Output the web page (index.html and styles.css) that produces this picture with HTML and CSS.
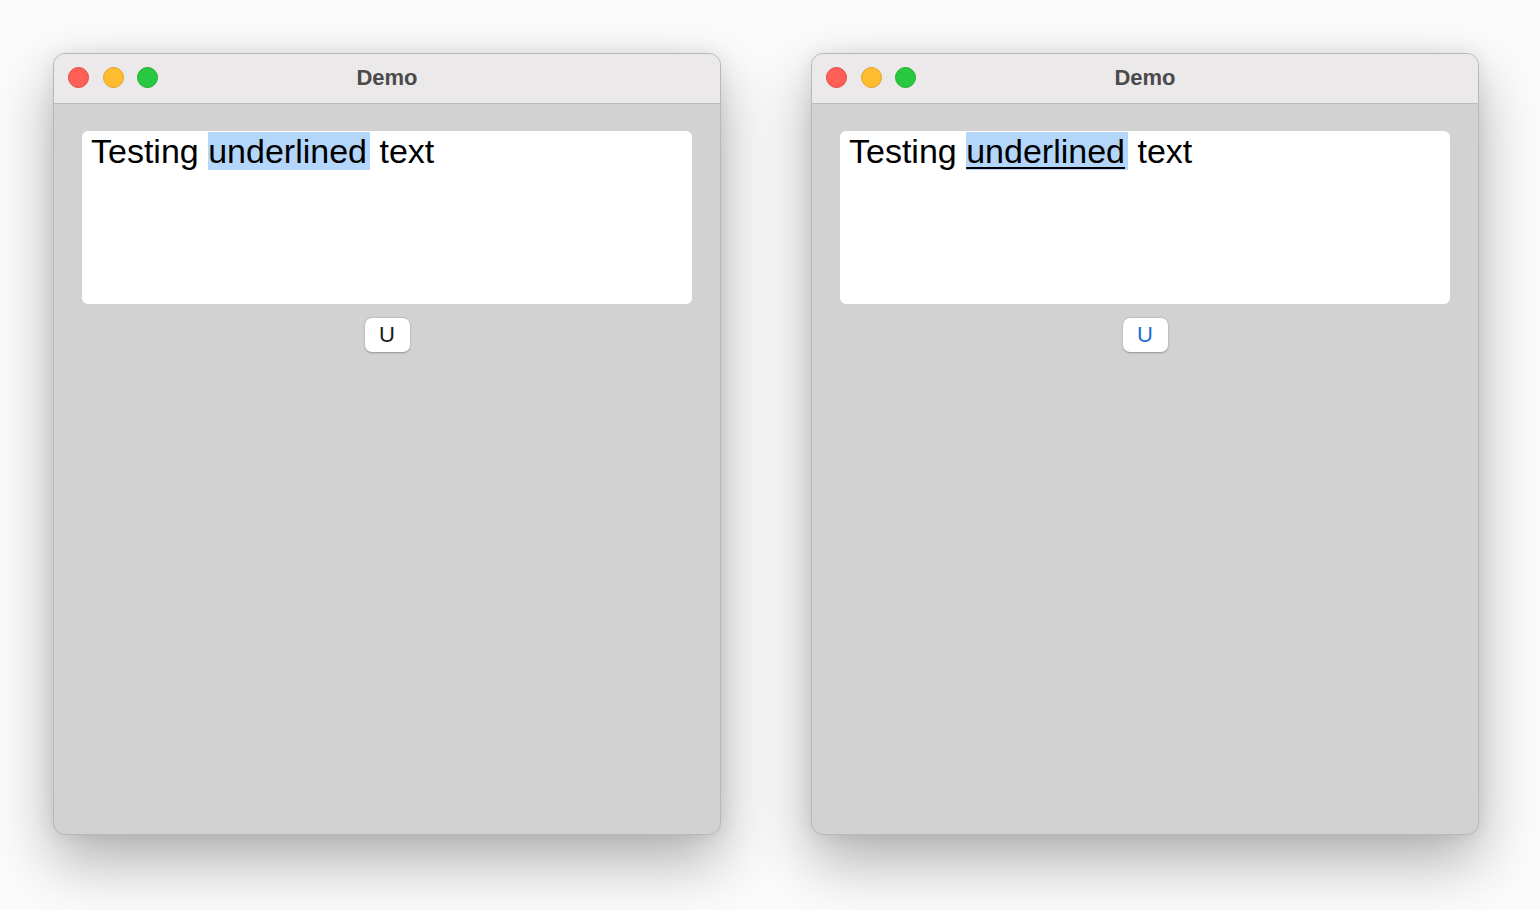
FILE: index.html
```html
<!DOCTYPE html>
<html>
<head>
<meta charset="utf-8">
<link rel="stylesheet" href="styles.css">
</head>
<body>
<div class="desk">
  <div class="window">
    <div class="titlebar">
      <div class="lights">
        <span class="light red"></span>
        <span class="light yellow"></span>
        <span class="light green"></span>
      </div>
      <div class="title">Demo</div>
    </div>
    <div class="content">
      <div class="editor"><span>Testing </span><span class="sel">underlined</span><span> text</span></div>
      <button class="ubtn">U</button>
    </div>
  </div>
  <div class="window">
    <div class="titlebar">
      <div class="lights">
        <span class="light red"></span>
        <span class="light yellow"></span>
        <span class="light green"></span>
      </div>
      <div class="title">Demo</div>
    </div>
    <div class="content">
      <div class="editor"><span>Testing </span><span class="sel under">underlined</span><span> text</span></div>
      <button class="ubtn active">U</button>
    </div>
  </div>
</div>
</body>
</html>
```
FILE: styles.css
```css
html, body {
  margin: 0;
  padding: 0;
  width: 1540px;
  height: 910px;
  overflow: hidden;
  background: #fbfbfb;
  font-family: "Liberation Sans", Arial, Helvetica, sans-serif;
}
.desk {
  display: flex;
  gap: 90px;
  padding: 53px 0 0 53px;
}
.window {
  width: 668px;
  height: 782px;
  box-sizing: border-box;
  border-radius: 12px;
  overflow: hidden;
  border: 1px solid #b9b8b9;
  background: #d3d2d3;
  box-shadow: 0 26px 60px rgba(0,0,0,0.3), 0 0 18px rgba(0,0,0,0.08);
  display: flex;
  flex-direction: column;
}
.titlebar {
  height: 49px;
  flex: none;
  background: #ece9ea;
  border-bottom: 1px solid #bdbcbd;
  position: relative;
  display: flex;
  align-items: center;
  justify-content: center;
}
.lights {
  position: absolute;
  left: 14px;
  top: 13px;
  display: flex;
  gap: 13.5px;
}
.light {
  width: 21px;
  height: 21px;
  border-radius: 50%;
  box-sizing: border-box;
}
.red { background: #fe5f57; border: 1px solid #e2473f; }
.yellow { background: #febc2e; border: 1px solid #e0a126; }
.green { background: #28c840; border: 1px solid #1fac2e; }
.title {
  font-size: 22px;
  font-weight: bold;
  color: #4b4a4b;
  padding-bottom: 2px;
}
.content {
  flex: 1;
  display: flex;
  flex-direction: column;
  align-items: center;
  padding: 27px 28px 0 28px;
}
.editor {
  align-self: stretch;
  height: 173px;
  background: #ffffff;
  border-radius: 6px;
  padding: 1px 0 0 9px;
  box-sizing: border-box;
  font-size: 34px;
  line-height: 39px;
  color: #000;
  white-space: pre;
}
.sel {
  background: #b4d6fb;
  padding-right: 3px;
}
.under {
  text-decoration: underline;
  text-decoration-thickness: 2px;
  text-underline-offset: 4px;
}
.ubtn {
  margin-top: 14px;
  width: 45px;
  height: 34px;
  border: none;
  border-radius: 7px;
  background: #ffffff;
  box-shadow: 0 0.5px 2px rgba(0,0,0,0.3);
  font-family: "Liberation Sans", Arial, sans-serif;
  font-size: 22px;
  color: #1a1a1a;
  padding: 0;
  display: flex;
  align-items: center;
  justify-content: center;
}
.ubtn.active {
  color: #1b6fd6;
}
```
